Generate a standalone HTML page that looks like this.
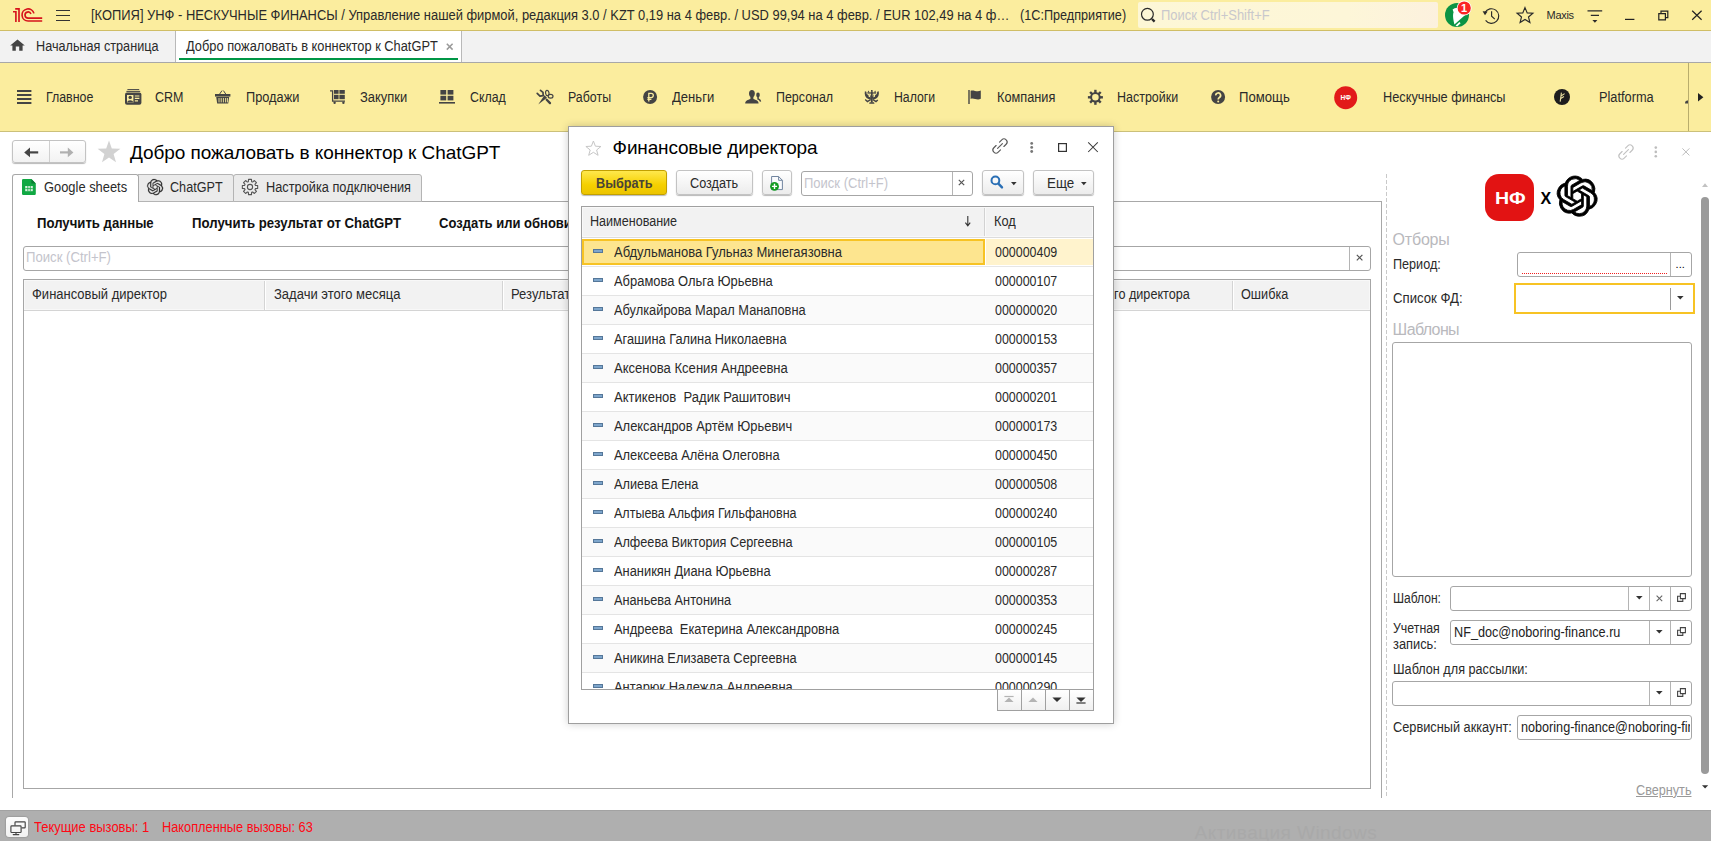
<!DOCTYPE html>
<html lang="ru"><head><meta charset="utf-8"><title>1С:Предприятие</title>
<style>
*{box-sizing:border-box;margin:0;padding:0}
html,body{width:1711px;height:841px;overflow:hidden;background:#fff}
body{font-family:"Liberation Sans",sans-serif;font-size:13px;color:#2a2a2a;position:relative}
.abs{position:absolute}
.t{position:absolute;white-space:pre;transform-origin:0 0}
svg{overflow:visible}
.btn{position:absolute;border:1px solid #c3c3c3;border-radius:3px;background:linear-gradient(#ffffff,#ececec);box-shadow:0 1px 1px rgba(0,0,0,.28)}
.inp{position:absolute;border:1px solid #a6a6a6;border-radius:3px;background:#fff}
.vsep{position:absolute;width:1px;background:#b4b4b4;top:0;bottom:0}
</style></head><body>
<div id="titlebar" class="abs" style="left:0px;top:0px;width:1711px;height:31px;background:#fbed9e;border-bottom:1px solid #d0be66"><svg class="abs" style="left:13px;top:8px;" width="30" height="15" viewBox="0 0 30 15"><g fill="none" stroke="#d6131c" stroke-width="1.65"><path d="M2.2 0.9 H6 V14.1"/><path d="M0 3.7 H2.9 V14.1"/><path d="M20.94 5.38 A6.05 6.05 0 1 0 15.1 13 H29.2"/><path d="M17.92 6.0 A3.05 3.05 0 1 0 15.05 10.1 H29.2"/></g></svg><svg class="abs" style="left:55px;top:9px;" width="16" height="13" viewBox="0 0 16 13"><g stroke="#333" stroke-width="1.2"><path d="M1 1.5H15M1 6.5H15M1 11.5H15"/></g></svg><span class="t" style="left:90.6px;top:6.0px;font-size:14px;line-height:18px;transform:scaleX(0.9223);">[КОПИЯ] УНФ - НЕСКУЧНЫЕ ФИНАНСЫ / Управление нашей фирмой, редакция 3.0 / KZT 0,19 на 4 февр. / USD 99,94 на 4 февр. / EUR 102,49 на 4 ф…</span><span class="t" style="left:1020.3px;top:6.0px;font-size:14px;line-height:18px;transform:scaleX(0.9037);">(1С:Предприятие)</span><div class="abs" style="left:1138px;top:2px;width:300px;height:26px;border-radius:2px;background:linear-gradient(90deg,#fdf7d6,#fdf6d8 70%,#fcf1de)"><svg class="abs" style="left:3px;top:3px;" width="16" height="18" viewBox="0 0 16 18"><circle cx="6.4" cy="9.3" r="5.9" fill="none" stroke="#2a2a2a" stroke-width="1.2"/><path d="M11 14L13.6 16.6" stroke="#2a2a2a" stroke-width="2.4" stroke-linecap="butt"/></svg></div><span class="t" style="left:1160.7px;top:6.0px;font-size:14px;line-height:18px;color:#c9c8cc;transform:scaleX(0.9261);">Поиск Ctrl+Shift+F</span><svg class="abs" style="left:1444px;top:2px;" width="28" height="27" viewBox="0 0 28 27"><circle cx="13" cy="13" r="12" fill="#0b9444"/><path d="M8.6 7.4 L9.6 10.2 C8.3 13.6 9.6 18.6 10.4 22.6 L18.6 15.2 L21.8 12.6 C18.8 10.4 15.4 7.4 13.6 5.8 L10.6 6.2 Z" fill="#fff"/><path d="M11.6 23.6 L15.4 20.0 L16.6 21.2 L13.2 24.6 Z" fill="#fff"/><circle cx="20.2" cy="6" r="7.4" fill="#fff"/><circle cx="20.2" cy="6" r="6.6" fill="#fb2323"/><text x="20.1" y="9.9" font-family="Liberation Sans" font-weight="700" font-size="11" fill="#fff" text-anchor="middle">1</text></svg><svg class="abs" style="left:1482px;top:6px;" width="19" height="19" viewBox="0 0 19 19"><path d="M3.0 6.6 A7.3 7.3 0 1 1 3.6 14.4" fill="none" stroke="#2a2a2a" stroke-width="1.15"/><path d="M0.6 5.2 L5.6 5.6 L3.0 9.2 Z" fill="#2a2a2a"/><path d="M9.6 5.2 V10.2 L12.8 13.2" fill="none" stroke="#2a2a2a" stroke-width="1.15"/></svg><svg class="abs" style="left:1516px;top:6px;" width="18" height="18" viewBox="0 0 18 18"><path d="M9 1.6 L11.2 6.9 L16.9 7.3 L12.5 11 L13.9 16.6 L9 13.5 L4.1 16.6 L5.5 11 L1.1 7.3 L6.8 6.9 Z" fill="none" stroke="#2a2a2a" stroke-width="1.15" stroke-linejoin="miter"/></svg><span class="t" style="left:1546.6px;top:7.5px;font-size:11px;line-height:15px;letter-spacing:-0.307px;">Maxis</span><svg class="abs" style="left:1587px;top:9px;" width="16" height="15" viewBox="0 0 16 15"><path d="M0.5 1.8H15.2M3.8 6.4H12" stroke="#2a2a2a" stroke-width="1.15"/><path d="M5.4 11 H10.4 L7.9 13.8 Z" fill="#2a2a2a"/></svg><svg class="abs" style="left:1625px;top:18px;" width="10" height="3" viewBox="0 0 10 3"><path d="M0 1.4H9.4" stroke="#222" stroke-width="1.2"/></svg><svg class="abs" style="left:1658px;top:10px;" width="12" height="11" viewBox="0 0 12 11"><path d="M0.8 3.6 H7.4 V9.8 H0.8 Z M3 3.6 V1.2 H9.8 V7.6 H7.4" fill="none" stroke="#222" stroke-width="1.2"/></svg><svg class="abs" style="left:1691px;top:10px;" width="12" height="11" viewBox="0 0 12 11"><path d="M1.2 0.8 L10.6 9.8 M10.6 0.8 L1.2 9.8" stroke="#222" stroke-width="1.2"/></svg></div>
<div id="tabbar" class="abs" style="left:0px;top:31px;width:1711px;height:32px;background:#f2f2f2;border-bottom:1px solid #a8a8a8"><svg class="abs" style="left:10px;top:8px;" width="15" height="12" viewBox="0 0 15 12"><path d="M7.5 0.4 L14.8 6.6 H12.6 V11.8 H9.2 V7.6 H5.8 V11.8 H2.4 V6.6 H0.2 Z" fill="#444"/></svg><span class="t" style="left:36.3px;top:6.0px;font-size:14px;line-height:18px;transform:scaleX(0.9043);">Начальная страница</span><div class="abs" style="left:175px;top:0px;width:287px;height:31px;background:#fff;border-left:1px solid #b9b9b9;border-right:1px solid #b9b9b9"></div><div class="abs" style="left:179px;top:27px;width:279px;height:2px;background:#009646"></div><span class="t" style="left:186.1px;top:6.0px;font-size:14px;line-height:18px;transform:scaleX(0.9165);">Добро пожаловать в коннектор к ChatGPT</span><svg class="abs" style="left:446px;top:12px;" width="8" height="8" viewBox="0 0 8 8"><path d="M0.8 0.8 L6.6 6.6 M6.6 0.8 L0.8 6.6" stroke="#9a9a9a" stroke-width="1.5"/></svg></div>
<div id="sections" class="abs" style="left:0px;top:63px;width:1711px;height:68px;background:#fbed9e"><svg class="abs" style="left:17px;top:27px;" width="15" height="15" viewBox="0 0 15 15"><path d="M0 1H14.4M0 5H14.4M0 9H14.4M0 13H14.4" stroke="#444" stroke-width="2"/></svg><span class="t" style="left:46.1px;top:24.8px;font-size:14px;line-height:18px;transform:scaleX(0.8841);">Главное</span><svg class="abs" style="left:125px;top:26px;" width="17" height="16" viewBox="0 0 17 16"><path d="M2.4 0.6H14.2M1.4 2.4H15.2" stroke="#444" stroke-width="1"/><rect x="0" y="3.6" width="16.4" height="12.2" rx="2" fill="#444"/><rect x="2" y="6" width="6.4" height="7.6" fill="#fbed9e"/><circle cx="5.2" cy="8.4" r="1.7" fill="#444"/><path d="M2.2 13.6 C2.4 10.6 8 10.6 8.2 13.6Z" fill="#444"/><path d="M9.8 7H14.4M9.8 9.4H14.4M9.8 11.8H13" stroke="#fbed9e" stroke-width="1.2"/></svg><span class="t" style="left:155.4px;top:24.8px;font-size:14px;line-height:18px;transform:scaleX(0.8937);">CRM</span><svg class="abs" style="left:215px;top:27px;" width="16" height="14" viewBox="0 0 16 14"><path d="M4.4 4.4 L7 0.6 M11 4.4 L8.4 0.6" stroke="#444" stroke-width="1" fill="none"/><rect x="0" y="4" width="15.4" height="2.6" fill="#444"/><path d="M1.2 7 H14.2 L13.2 13.6 H2.2 Z" fill="#444"/><path d="M4 8V12.4M6.2 8V12.4M8.4 8V12.4M10.6 8V12.4M12.4 8V12.4" stroke="#fbed9e" stroke-width="0.9"/></svg><span class="t" style="left:245.5px;top:24.8px;font-size:14px;line-height:18px;transform:scaleX(0.9116);">Продажи</span><svg class="abs" style="left:330px;top:27px;" width="16" height="14" viewBox="0 0 16 14"><path d="M0 0.8H2.6V11.2H15" stroke="#444" stroke-width="1.3" fill="none"/><rect x="4" y="0" width="4.6" height="3.8" fill="#444"/><rect x="9.4" y="0" width="5.4" height="3.8" fill="#444"/><rect x="4" y="4.8" width="4.6" height="4.4" fill="#444"/><rect x="9.4" y="4.8" width="5.4" height="4.4" fill="#444"/><circle cx="4.6" cy="12.8" r="1.2" fill="#444"/><circle cx="13.4" cy="12.8" r="1.2" fill="#444"/></svg><span class="t" style="left:360.3px;top:24.8px;font-size:14px;line-height:18px;transform:scaleX(0.9244);">Закупки</span><svg class="abs" style="left:439px;top:27px;" width="16" height="14" viewBox="0 0 16 14"><rect x="1.4" y="0" width="5.8" height="4.6" fill="#444"/><rect x="8.6" y="0" width="5.8" height="4.6" fill="#444"/><rect x="1.4" y="5.8" width="5.8" height="4.6" fill="#444"/><rect x="8.6" y="5.8" width="5.8" height="4.6" fill="#444"/><rect x="0" y="12" width="16" height="1.6" fill="#444"/></svg><span class="t" style="left:469.5px;top:24.8px;font-size:14px;line-height:18px;transform:scaleX(0.8833);">Склад</span><svg class="abs" style="left:536px;top:26px;" width="17" height="17" viewBox="0 0 17 17"><path d="M4.5 1.3 L7 3.4 L7.2 6.6 L4 7.2 L1.2 4.4" fill="none" stroke="#444" stroke-width="1.7" stroke-linejoin="round" stroke-linecap="round"/><ellipse cx="11.3" cy="4" rx="1.7" ry="2.7" transform="rotate(-10 11.3 4)" fill="none" stroke="#444" stroke-width="1.2"/><ellipse cx="14.6" cy="7.2" rx="2.4" ry="1.9" fill="none" stroke="#444" stroke-width="1.2"/><path d="M8.4 6.2 L11 8.8 L2.2 15.6 Z" fill="#444"/><path d="M10.7 10.8 L14 14.1" stroke="#444" stroke-width="2.3" stroke-linecap="round"/></svg><span class="t" style="left:567.5px;top:24.8px;font-size:14px;line-height:18px;transform:scaleX(0.8861);">Работы</span><svg class="abs" style="left:643px;top:27px;" width="15" height="15" viewBox="0 0 15 15"><circle cx="7.1" cy="7" r="7" fill="#444"/><path d="M5.8 11.4 V3.4 H8.2 A2.1 2.1 0 0 1 8.2 7.6 H4.4 M4.4 9.4 H8.4" fill="none" stroke="#fbed9e" stroke-width="1.3"/></svg><span class="t" style="left:671.7px;top:24.8px;font-size:14px;line-height:18px;transform:scaleX(0.9329);">Деньги</span><svg class="abs" style="left:745px;top:27px;" width="17" height="14" viewBox="0 0 17 14"><ellipse cx="6.9" cy="3.6" rx="2.9" ry="3.6" fill="#444"/><path d="M0.2 13.5 C0.2 10.6 3 9.9 5.4 9 V6.4 H8.4 V9 C10.8 9.9 13.6 10.6 13.6 13.5 Z" fill="#444"/><ellipse cx="13" cy="5" rx="1.8" ry="2.4" fill="#444"/><path d="M12.3 6.4 H13.8 V8.4 C15 8.9 16 9.8 16.2 11.4 L14.9 11.8 C14.6 10.4 13.6 9.8 12.3 9.4 Z" fill="#444"/></svg><span class="t" style="left:775.7px;top:24.8px;font-size:14px;line-height:18px;transform:scaleX(0.8885);">Персонал</span><svg class="abs" style="left:864px;top:27px;" width="16" height="14" viewBox="0 0 16 14"><g fill="#444"><rect x="7" y="0" width="1.6" height="1.6"/><path d="M3.4 2.6 L4.5 0.4 L5.6 2.6Z M10 2.6 L11.1 0.4 L12.2 2.6Z"/><rect x="3.4" y="2.4" width="8.8" height="1.2"/><rect x="6.9" y="1.4" width="1.8" height="11.2"/><path d="M0.9 1.2 L2.4 1.8 L2.7 4 L4.4 5 L4.7 6.8 L6.9 7.6 V9.8 L4.4 9 L2.6 8 L1.2 6 L0.7 3.6Z"/><path d="M14.7 1.2 L13.2 1.8 L12.9 4 L11.2 5 L10.9 6.8 L8.7 7.6 V9.8 L11.2 9 L13 8 L14.4 6 L14.9 3.6Z"/><path d="M5.6 4 L7 6.4 H8.6 L10 4 L9 8.6 H6.6Z"/><path d="M5.1 13.8 L5.6 12.2 H10 L10.5 13.8Z"/></g><path d="M6.6 9.6 L3.4 11.6 L1.2 9.6 M9 9.6 L12 11.6 L13.8 10" fill="none" stroke="#444" stroke-width="1.3"/></svg><span class="t" style="left:894.4px;top:24.8px;font-size:14px;line-height:18px;transform:scaleX(0.8778);">Налоги</span><svg class="abs" style="left:968px;top:27px;" width="14" height="14" viewBox="0 0 14 14"><path d="M1 0V14" stroke="#444" stroke-width="1.4"/><path d="M2.6 0.8 C5.6 -0.6 8.4 2.4 12.8 0.6 V8.8 C8.8 10.8 5.6 7.4 2.6 9 Z" fill="#444"/></svg><span class="t" style="left:997.1px;top:24.8px;font-size:14px;line-height:18px;transform:scaleX(0.9098);">Компания</span><svg class="abs" style="left:1088px;top:27px;" width="15" height="15" viewBox="0 0 15 15"><rect x="6.2" y="-0.2" width="2.4" height="3.4" transform="rotate(0 7.4 7.3)" fill="#444"/><rect x="6.2" y="-0.2" width="2.4" height="3.4" transform="rotate(45 7.4 7.3)" fill="#444"/><rect x="6.2" y="-0.2" width="2.4" height="3.4" transform="rotate(90 7.4 7.3)" fill="#444"/><rect x="6.2" y="-0.2" width="2.4" height="3.4" transform="rotate(135 7.4 7.3)" fill="#444"/><rect x="6.2" y="-0.2" width="2.4" height="3.4" transform="rotate(180 7.4 7.3)" fill="#444"/><rect x="6.2" y="-0.2" width="2.4" height="3.4" transform="rotate(225 7.4 7.3)" fill="#444"/><rect x="6.2" y="-0.2" width="2.4" height="3.4" transform="rotate(270 7.4 7.3)" fill="#444"/><rect x="6.2" y="-0.2" width="2.4" height="3.4" transform="rotate(315 7.4 7.3)" fill="#444"/><circle cx="7.4" cy="7.3" r="4.3" fill="none" stroke="#444" stroke-width="2"/></svg><span class="t" style="left:1117.4px;top:24.8px;font-size:14px;line-height:18px;transform:scaleX(0.8914);">Настройки</span><svg class="abs" style="left:1211px;top:26.5px;" width="15" height="15" viewBox="0 0 15 15"><circle cx="7.1" cy="7" r="7" fill="#444"/><path d="M4.8 5.4 A2.4 2.4 0 1 1 8.4 7.4 C7.4 8 7.2 8.4 7.2 9.4" fill="none" stroke="#fbed9e" stroke-width="1.7"/><circle cx="7.2" cy="11.4" r="1" fill="#fbed9e"/></svg><span class="t" style="left:1238.8px;top:24.8px;font-size:14px;line-height:18px;transform:scaleX(0.9394);">Помощь</span><svg class="abs" style="left:1333.5px;top:22.5px;" width="24" height="24" viewBox="0 0 24 24"><circle cx="11.7" cy="11.7" r="11.5" fill="#e21a1a"/><text x="11.7" y="14.2" font-family="Liberation Sans" font-weight="700" font-size="6.6" fill="#fff" text-anchor="middle">НФ</text></svg><span class="t" style="left:1383.1px;top:24.8px;font-size:14px;line-height:18px;transform:scaleX(0.9101);">Нескучные финансы</span><svg class="abs" style="left:1554px;top:26px;" width="16" height="16" viewBox="0 0 16 16"><circle cx="8" cy="8" r="8" fill="#1d1d1d"/><path d="M6.2 12.6 L7.4 3.6 M7 7 L10.6 4.6 M6.8 9.4 L10 7.6" stroke="#e9dfa0" stroke-width="1.1" fill="none"/></svg><span class="t" style="left:1599.3px;top:24.8px;font-size:14px;line-height:18px;transform:scaleX(0.9129);">Platforma</span><svg class="abs" style="left:1685px;top:36px;" width="4" height="5" viewBox="0 0 4 5"><path d="M0 4.4 C0 2 1.6 1.6 3.4 1.6 V4.4Z" fill="#444"/></svg><div class="abs" style="left:1688px;top:0px;width:1px;height:68px;background:#b9ad6c"></div><svg class="abs" style="left:1698px;top:29.5px;" width="6" height="9" viewBox="0 0 6 9"><path d="M0 0 L5.4 4.2 L0 8.4Z" fill="#222"/></svg></div>
<div class="abs" style="left:0px;top:131px;width:1711px;height:1px;background:#cbc07a"></div>
<div id="main" class="abs" style="left:0px;top:132px;width:1711px;height:678px;background:#fff"><div class="btn" style="left:12px;top:8px;width:74px;height:23px;background:linear-gradient(#fff,#f2f2f2)"><div class="abs" style="left:36px;top:0;width:1px;height:21px;background:#d0d0d0"></div></div><svg class="abs" style="left:24px;top:15px;" width="15" height="11" viewBox="0 0 15 11"><path d="M14.2 5.4H3" stroke="#444" stroke-width="2.2"/><path d="M0.2 5.4 L6 0.6 V10.2Z" fill="#444"/></svg><svg class="abs" style="left:60px;top:15px;" width="14" height="11" viewBox="0 0 14 11"><path d="M0 5.4H10.6" stroke="#b0b0b0" stroke-width="2.2"/><path d="M13.4 5.4 L7.8 0.6 V10.2Z" fill="#b0b0b0"/></svg><svg class="abs" style="left:96.5px;top:8.2px;" width="24" height="23" viewBox="0 0 24 23"><path d="M12 0.6 L14.8 8.6 L23.4 8.8 L16.6 14 L19 22.2 L12 17.4 L5 22.2 L7.4 14 L0.6 8.8 L9.2 8.6 Z" fill="#d2d2d2"/></svg><span class="t" style="left:130.0px;top:9.2px;font-size:19px;line-height:23px;color:#000;letter-spacing:-0.068px;">Добро пожаловать в коннектор к ChatGPT</span><div class="abs" style="left:12px;top:69px;width:1370px;height:597px;border:1px solid #a8a8a8;border-bottom:none;background:#fff"></div><div class="abs" style="left:138px;top:42px;width:96px;height:28px;background:#ebebeb;border:1px solid #b4b4b4;border-left:none;border-radius:0 3px 0 0"></div><div class="abs" style="left:233px;top:42px;width:189px;height:28px;background:#ebebeb;border:1px solid #b4b4b4;border-radius:3px 3px 0 0"></div><div class="abs" style="left:12px;top:42px;width:127px;height:28px;background:#fff;border:1px solid #a8a8a8;border-bottom:none;border-radius:3px 3px 0 0"></div><svg class="abs" style="left:22px;top:47px;" width="14" height="16" viewBox="0 0 14 16"><path d="M0 1.2 A1.2 1.2 0 0 1 1.2 0 H9.4 L13.8 4.4 V14.8 A1.2 1.2 0 0 1 12.6 16 H1.2 A1.2 1.2 0 0 1 0 14.8Z" fill="#11a843"/><path d="M9.4 0 L13.8 4.4 H9.4Z" fill="#0a7c33"/><rect x="3.2" y="7" width="7.6" height="5.2" fill="#d8f0df"/><path d="M3.2 9.6H10.8M5.8 7V12.2M8.3 7V12.2" stroke="#11a843" stroke-width="0.8"/></svg><span class="t" style="left:44.1px;top:45.6px;font-size:14px;line-height:18px;transform:scaleX(0.9203);">Google sheets</span><svg class="abs" style="left:146.8px;top:46.8px;" width="16.2" height="16.2" viewBox="0 0 24 24"><path d="M22.2819 9.8211a5.9847 5.9847 0 0 0-.5157-4.9108 6.0462 6.0462 0 0 0-6.5098-2.9A6.0651 6.0651 0 0 0 4.9807 4.1818a5.9847 5.9847 0 0 0-3.9977 2.9 6.0462 6.0462 0 0 0 .7427 7.0966 5.98 5.98 0 0 0 .511 4.9107 6.051 6.051 0 0 0 6.5146 2.9001A5.9847 5.9847 0 0 0 13.2599 24a6.0557 6.0557 0 0 0 5.7718-4.2058 5.9894 5.9894 0 0 0 3.9977-2.9001 6.0557 6.0557 0 0 0-.7475-7.0729zm-9.022 12.6081a4.4755 4.4755 0 0 1-2.8764-1.0408l.1419-.0804 4.7783-2.7582a.7948.7948 0 0 0 .3927-.6813v-6.7369l2.02 1.1686a.071.071 0 0 1 .038.052v5.5826a4.504 4.504 0 0 1-4.4945 4.4944zm-9.6607-4.1254a4.4708 4.4708 0 0 1-.5346-3.0137l.142.0852 4.783 2.7582a.7712.7712 0 0 0 .7806 0l5.8428-3.3685v2.3324a.0804.0804 0 0 1-.0332.0615L9.74 19.9502a4.4992 4.4992 0 0 1-6.1408-1.6464zM2.3408 7.8956a4.485 4.485 0 0 1 2.3655-1.9728V11.6a.7664.7664 0 0 0 .3879.6765l5.8144 3.3543-2.0201 1.1685a.0757.0757 0 0 1-.071 0l-4.8303-2.7865A4.504 4.504 0 0 1 2.3408 7.872zm16.5963 3.8558L13.1038 8.364 15.1192 7.2a.0757.0757 0 0 1 .071 0l4.8303 2.7913a4.4944 4.4944 0 0 1-.6765 8.1042v-5.6772a.79.79 0 0 0-.407-.667zm2.0107-3.0231l-.142-.0852-4.7735-2.7818a.7759.7759 0 0 0-.7854 0L9.409 9.2297V6.8974a.0662.0662 0 0 1 .0284-.0615l4.8303-2.7866a4.4992 4.4992 0 0 1 6.6802 4.66zM8.3065 12.863l-2.02-1.1638a.0804.0804 0 0 1-.038-.0567V6.0742a4.4992 4.4992 0 0 1 7.3757-3.4537l-.142.0805L8.704 5.459a.7948.7948 0 0 0-.3927.6813zm1.0976-2.3654l2.602-1.4998 2.6069 1.4998v2.9994l-2.5974 1.4997-2.6067-1.4997Z" fill="#333" stroke="#333" stroke-width="0.3"/></svg><span class="t" style="left:170.2px;top:45.6px;font-size:14px;line-height:18px;transform:scaleX(0.9013);">ChatGPT</span><svg class="abs" style="left:242px;top:47px;" width="16" height="16" viewBox="0 0 16 16"><path d="M6.53 0.34 L9.47 0.34 L9.65 2.65 L10.61 3.05 L12.37 1.54 L14.46 3.63 L12.95 5.39 L13.35 6.35 L15.66 6.53 L15.66 9.47 L13.35 9.65 L12.95 10.61 L14.46 12.37 L12.37 14.46 L10.61 12.95 L9.65 13.35 L9.47 15.66 L6.53 15.66 L6.35 13.35 L5.39 12.95 L3.63 14.46 L1.54 12.37 L3.05 10.61 L2.65 9.65 L0.34 9.47 L0.34 6.53 L2.65 6.35 L3.05 5.39 L1.54 3.63 L3.63 1.54 L5.39 3.05 L6.35 2.65Z" fill="none" stroke="#555" stroke-width="1.1" stroke-linejoin="round"/><circle cx="8" cy="8" r="2.6" fill="none" stroke="#555" stroke-width="1.1"/></svg><span class="t" style="left:265.5px;top:45.6px;font-size:14px;line-height:18px;transform:scaleX(0.9125);">Настройка подключения</span><span class="t" style="left:37.3px;top:82.0px;font-size:14px;line-height:18px;font-weight:700;color:#111;transform:scaleX(0.9397);">Получить данные</span><span class="t" style="left:192.0px;top:82.0px;font-size:14px;line-height:18px;font-weight:700;color:#111;transform:scaleX(0.9418);">Получить результат от ChatGPT</span><span class="t" style="left:439.0px;top:82.0px;font-size:14px;line-height:18px;font-weight:700;color:#111;transform:scaleX(0.9300);">Создать или обновить черновики писем</span><div class="inp" style="left:23px;top:114px;width:1348px;height:25px;"><div class="vsep" style="left:1325px"></div></div><span class="t" style="left:26.0px;top:116.2px;font-size:14px;line-height:18px;color:#c4c4cc;transform:scaleX(0.9391);">Поиск (Ctrl+F)</span><svg class="abs" style="left:1356px;top:122px;" width="8" height="8" viewBox="0 0 8 8"><path d="M0.8 0.8 L6.4 6.4 M6.4 0.8 L0.8 6.4" stroke="#555" stroke-width="1.2"/></svg><div class="abs" style="left:23px;top:147px;width:1348px;height:510px;border:1px solid #a6a6a6;background:#fff"></div><div class="abs" style="left:24px;top:148px;width:1346px;height:31px;background:#f2f2f2;border-bottom:1px solid #d4d4d4;box-shadow:inset 0 0 0 1px #f8f8f8"></div><div class="abs" style="left:264px;top:149px;width:2px;height:29px;background:#fff;border-left:1px solid #d4d4d4"></div><div class="abs" style="left:502px;top:149px;width:2px;height:29px;background:#fff;border-left:1px solid #d4d4d4"></div><div class="abs" style="left:740px;top:149px;width:2px;height:29px;background:#fff;border-left:1px solid #d4d4d4"></div><div class="abs" style="left:978px;top:149px;width:2px;height:29px;background:#fff;border-left:1px solid #d4d4d4"></div><div class="abs" style="left:1232px;top:149px;width:2px;height:29px;background:#fff;border-left:1px solid #d4d4d4"></div><span class="t" style="left:32.0px;top:153.0px;font-size:14px;line-height:18px;transform:scaleX(0.9275);">Финансовый директор</span><span class="t" style="left:273.5px;top:153.0px;font-size:14px;line-height:18px;transform:scaleX(0.9298);">Задачи этого месяца</span><span class="t" style="left:511.0px;top:153.0px;font-size:14px;line-height:18px;transform:scaleX(0.9300);">Результат от ChatGPT</span><span class="t" style="left:749.0px;top:153.0px;font-size:14px;line-height:18px;transform:scaleX(0.9300);">Ссылка на документ</span><span class="t" style="left:1010.0px;top:153.0px;font-size:14px;line-height:18px;transform:scaleX(0.9022);">Почта финансового директора</span><span class="t" style="left:1241.2px;top:153.0px;font-size:14px;line-height:18px;transform:scaleX(0.9063);">Ошибка</span><div class="abs" style="left:1386px;top:42px;width:1px;height:622px;background:repeating-linear-gradient(#c9c9c9 0 4px,#fff 4px 6px)"></div></div>
<div id="right" class="abs" style="left:1388px;top:132px;width:323px;height:678px;"><svg class="abs" style="left:229.5px;top:11.5px;" width="16" height="16" viewBox="0 0 16 16"><g fill="none" stroke="#c2c2c2" stroke-width="1.15" stroke-linecap="round" transform="translate(8 8) rotate(-45)"><path d="M-2.4 -3.1 H-5.6 A3.1 3.1 0 0 0 -5.6 3.1 H-2.4"/><path d="M2.4 -3.1 H5.6 A3.1 3.1 0 0 1 5.6 3.1 H2.4"/><path d="M-3.4 0 H3.4"/></g></svg><svg class="abs" style="left:266px;top:14px;" width="4" height="12" viewBox="0 0 4 12"><circle cx="1.8" cy="1.6" r="1.3" fill="#bdbdbd"/><circle cx="1.8" cy="5.9" r="1.3" fill="#bdbdbd"/><circle cx="1.8" cy="10.2" r="1.3" fill="#bdbdbd"/></svg><svg class="abs" style="left:293.5px;top:15.5px;" width="8" height="8" viewBox="0 0 8 8"><path d="M0.4 0.4 L7.4 7.4 M7.4 0.4 L0.4 7.4" stroke="#bdbdbd" stroke-width="1"/></svg><div class="abs" style="left:97px;top:42px;width:49px;height:47px;background:#e21313;border-radius:14px"></div><span class="t" style="left:107.1px;top:56.9px;font-size:16px;line-height:20px;font-weight:700;color:#fff;transform:scaleX(1.22);transform-origin:0 50%;">НФ</span><span class="t" style="left:152.6px;top:57.0px;font-size:16px;line-height:20px;font-weight:700;color:#000;">X</span><svg class="abs" style="left:169px;top:44.4px;" width="40.3" height="40.3" viewBox="0 0 24 24"><path d="M22.2819 9.8211a5.9847 5.9847 0 0 0-.5157-4.9108 6.0462 6.0462 0 0 0-6.5098-2.9A6.0651 6.0651 0 0 0 4.9807 4.1818a5.9847 5.9847 0 0 0-3.9977 2.9 6.0462 6.0462 0 0 0 .7427 7.0966 5.98 5.98 0 0 0 .511 4.9107 6.051 6.051 0 0 0 6.5146 2.9001A5.9847 5.9847 0 0 0 13.2599 24a6.0557 6.0557 0 0 0 5.7718-4.2058 5.9894 5.9894 0 0 0 3.9977-2.9001 6.0557 6.0557 0 0 0-.7475-7.0729zm-9.022 12.6081a4.4755 4.4755 0 0 1-2.8764-1.0408l.1419-.0804 4.7783-2.7582a.7948.7948 0 0 0 .3927-.6813v-6.7369l2.02 1.1686a.071.071 0 0 1 .038.052v5.5826a4.504 4.504 0 0 1-4.4945 4.4944zm-9.6607-4.1254a4.4708 4.4708 0 0 1-.5346-3.0137l.142.0852 4.783 2.7582a.7712.7712 0 0 0 .7806 0l5.8428-3.3685v2.3324a.0804.0804 0 0 1-.0332.0615L9.74 19.9502a4.4992 4.4992 0 0 1-6.1408-1.6464zM2.3408 7.8956a4.485 4.485 0 0 1 2.3655-1.9728V11.6a.7664.7664 0 0 0 .3879.6765l5.8144 3.3543-2.0201 1.1685a.0757.0757 0 0 1-.071 0l-4.8303-2.7865A4.504 4.504 0 0 1 2.3408 7.872zm16.5963 3.8558L13.1038 8.364 15.1192 7.2a.0757.0757 0 0 1 .071 0l4.8303 2.7913a4.4944 4.4944 0 0 1-.6765 8.1042v-5.6772a.79.79 0 0 0-.407-.667zm2.0107-3.0231l-.142-.0852-4.7735-2.7818a.7759.7759 0 0 0-.7854 0L9.409 9.2297V6.8974a.0662.0662 0 0 1 .0284-.0615l4.8303-2.7866a4.4992 4.4992 0 0 1 6.6802 4.66zM8.3065 12.863l-2.02-1.1638a.0804.0804 0 0 1-.038-.0567V6.0742a4.4992 4.4992 0 0 1 7.3757-3.4537l-.142.0805L8.704 5.459a.7948.7948 0 0 0-.3927.6813zm1.0976-2.3654l2.602-1.4998 2.6069 1.4998v2.9994l-2.5974 1.4997-2.6067-1.4997Z" fill="#000" stroke="#000" stroke-width="0.5"/></svg><span class="t" style="left:4.6px;top:98.0px;font-size:16px;line-height:20px;color:#b9b9bd;letter-spacing:-0.206px;">Отборы</span><span class="t" style="left:4.6px;top:123.1px;font-size:14px;line-height:18px;transform:scaleX(0.9019);">Период:</span><div class="inp" style="left:129px;top:120px;width:175px;height:25px;"><div class="vsep" style="left:152px"></div><div class="abs" style="left:4px;top:20px;width:145px;height:1px;background:repeating-linear-gradient(90deg,#f02020 0 1px,#fff 1px 2px)"></div></div><span class="t" style="left:287.5px;top:125.0px;font-size:11px;line-height:15px;color:#000;letter-spacing:0.109px;">...</span><span class="t" style="left:4.6px;top:156.8px;font-size:14px;line-height:18px;transform:scaleX(0.9401);">Список ФД:</span><div class="abs" style="left:126px;top:151px;width:181px;height:31px;border:2px solid #f7c324;background:#fff"><div class="abs" style="left:153.5px;top:2.5px;width:1px;height:22px;background:#9a9a9a"></div></div><svg class="abs" style="left:289px;top:163.5px;" width="7" height="4" viewBox="0 0 7 4"><path d="M0 0H6.6L3.3 3.6Z" fill="#333"/></svg><span class="t" style="left:4.6px;top:188.4px;font-size:16px;line-height:20px;color:#b9b9bd;letter-spacing:-0.624px;">Шаблоны</span><div class="inp" style="left:4px;top:210px;width:300px;height:235px;"></div><span class="t" style="left:4.6px;top:457.0px;font-size:14px;line-height:18px;transform:scaleX(0.8600);">Шаблон:</span><div class="inp" style="left:62px;top:454px;width:242px;height:25px;"><div class="vsep" style="left:176.6px"></div><div class="vsep" style="left:197.6px"></div><div class="vsep" style="left:218.6px"></div></div><svg class="abs" style="left:247.7px;top:464.2px;" width="7" height="4" viewBox="0 0 7 4"><path d="M0 0H6.6L3.3 3.6Z" fill="#333"/></svg><svg class="abs" style="left:268.2px;top:462.7px;" width="7" height="7" viewBox="0 0 7 7"><path d="M0.6 0.6 L6.2 6.2 M6.2 0.6 L0.6 6.2" stroke="#666" stroke-width="1.1"/></svg><svg class="abs" style="left:288.5px;top:461px;" width="9" height="9" viewBox="0 0 9 9"><path d="M3.4 0.6H8.4V5.6H3.4Z" fill="none" stroke="#444" stroke-width="1.1"/><path d="M3.2 3.2H0.6V8.4H5.8V5.8" fill="none" stroke="#444" stroke-width="1.1"/></svg><span class="t" style="left:4.6px;top:487.1px;font-size:14px;line-height:18px;transform:scaleX(0.8825);">Учетная</span><span class="t" style="left:4.6px;top:503.0px;font-size:14px;line-height:18px;transform:scaleX(0.9185);">запись:</span><div class="inp" style="left:62px;top:488px;width:242px;height:25px;"><div class="vsep" style="left:197.6px"></div><div class="vsep" style="left:218.6px"></div></div><span class="t" style="left:66.1px;top:490.8px;font-size:14px;line-height:18px;color:#222;transform:scaleX(0.9050);">NF_doc@noboring-finance.ru</span><svg class="abs" style="left:268.4px;top:498.2px;" width="7" height="4" viewBox="0 0 7 4"><path d="M0 0H6.6L3.3 3.6Z" fill="#333"/></svg><svg class="abs" style="left:288.5px;top:495px;" width="9" height="9" viewBox="0 0 9 9"><path d="M3.4 0.6H8.4V5.6H3.4Z" fill="none" stroke="#444" stroke-width="1.1"/><path d="M3.2 3.2H0.6V8.4H5.8V5.8" fill="none" stroke="#444" stroke-width="1.1"/></svg><span class="t" style="left:4.6px;top:528.1px;font-size:14px;line-height:18px;transform:scaleX(0.9036);">Шаблон для рассылки:</span><div class="inp" style="left:4px;top:549px;width:300px;height:25px;"><div class="vsep" style="left:255.6px"></div><div class="vsep" style="left:276.6px"></div></div><svg class="abs" style="left:268.4px;top:559.2px;" width="7" height="4" viewBox="0 0 7 4"><path d="M0 0H6.6L3.3 3.6Z" fill="#333"/></svg><svg class="abs" style="left:288.5px;top:556px;" width="9" height="9" viewBox="0 0 9 9"><path d="M3.4 0.6H8.4V5.6H3.4Z" fill="none" stroke="#444" stroke-width="1.1"/><path d="M3.2 3.2H0.6V8.4H5.8V5.8" fill="none" stroke="#444" stroke-width="1.1"/></svg><span class="t" style="left:4.6px;top:585.9px;font-size:14px;line-height:18px;transform:scaleX(0.9114);">Сервисный аккаунт:</span><div class="inp" style="left:129px;top:583px;width:175px;height:25px;overflow:hidden"></div><div class="abs" style="left:130px;top:584px;width:172px;height:23px;overflow:hidden"><span class="t" style="left:3.2px;top:1.9px;font-size:14px;line-height:18px;color:#222;transform:scaleX(0.9300);transform:scaleX(0.902);">noboring-finance@noboring-finance.iam.gserviceaccount.com</span></div><span class="t" style="left:248.3px;top:648.6px;font-size:14px;line-height:18px;color:#999;transform:scaleX(0.9038);text-decoration:underline;">Свернуть</span><svg class="abs" style="left:314px;top:51px;" width="7" height="4" viewBox="0 0 7 4"><path d="M0 3.9 L3 0.3 L6 3.9Z" fill="#c2c2c2"/></svg><div class="abs" style="left:313px;top:65px;width:8px;height:577px;background:#9a9a9a;border-radius:4px"></div><svg class="abs" style="left:314px;top:653px;" width="7" height="4" viewBox="0 0 7 4"><path d="M0 0.2 H6.2 L3.1 3.6Z" fill="#333"/></svg></div>
<div id="dialog" class="abs" style="left:568px;top:126px;width:546px;height:598px;background:#fff;border:1px solid #9e9e9e;box-shadow:0 0 8px rgba(0,0,0,.2)"><svg class="abs" style="left:15.5px;top:12.5px;" width="17" height="16" viewBox="0 0 17 16"><path d="M8.4 1 L10.4 6.2 L15.9 6.5 L11.6 10 L13.1 15.3 L8.4 12.3 L3.7 15.3 L5.2 10 L0.9 6.5 L6.4 6.2 Z" fill="none" stroke="#c6c6c6" stroke-width="1"/></svg><span class="t" style="left:43.6px;top:9.0px;font-size:19px;line-height:23px;color:#000;letter-spacing:-0.162px;">Финансовые директора</span><svg class="abs" style="left:422.5px;top:11.4px;" width="16" height="16" viewBox="0 0 16 16"><g fill="none" stroke="#5a5a5a" stroke-width="1.15" stroke-linecap="round" transform="translate(8 8) rotate(-45)"><path d="M-2.4 -3.1 H-5.6 A3.1 3.1 0 0 0 -5.6 3.1 H-2.4"/><path d="M2.4 -3.1 H5.6 A3.1 3.1 0 0 1 5.6 3.1 H2.4"/><path d="M-3.4 0 H3.4"/></g></svg><svg class="abs" style="left:460.7px;top:15px;" width="4" height="12" viewBox="0 0 4 12"><circle cx="1.7" cy="1.4" r="1.4" fill="#777"/><circle cx="1.7" cy="5.4" r="1.4" fill="#777"/><circle cx="1.7" cy="9.5" r="1.4" fill="#777"/></svg><svg class="abs" style="left:489px;top:16px;" width="9" height="9" viewBox="0 0 9 9"><rect x="0.6" y="0.6" width="7.8" height="7.8" fill="none" stroke="#333" stroke-width="1.2"/></svg><svg class="abs" style="left:519px;top:15px;" width="11" height="11" viewBox="0 0 11 11"><path d="M0.2 0.4 L9.8 10 M9.8 0.4 L0.2 10" stroke="#3a3a3a" stroke-width="1.05"/></svg><div class="btn" style="left:12px;top:43px;width:86px;height:25px;background:linear-gradient(#ffe84d,#f5d000 60%,#ecc400);border-color:#c2a000"></div><span class="t" style="left:26.6px;top:46.8px;font-size:14px;line-height:18px;font-weight:700;color:#4a4436;transform:scaleX(0.9038);">Выбрать</span><div class="btn" style="left:107px;top:43px;width:77px;height:25px;"></div><span class="t" style="left:121.2px;top:46.8px;font-size:14px;line-height:18px;transform:scaleX(0.9057);">Создать</span><div class="btn" style="left:193px;top:43px;width:30px;height:25px;"></div><svg class="abs" style="left:201px;top:49px;" width="14" height="17" viewBox="0 0 14 17"><path d="M1.6 0.5 H8.6 L12.4 4.3 V13.6 H1.6Z" fill="#fafbfd" stroke="#71859f" stroke-width="1"/><path d="M8.6 0.5 V4.3 H12.4" fill="none" stroke="#71859f" stroke-width="1"/><circle cx="4.5" cy="10.4" r="4.4" fill="#129a22"/><path d="M4.5 7.8V13M1.9 10.4H7.1" stroke="#fff" stroke-width="1.4"/></svg><div class="inp" style="left:232px;top:44px;width:172px;height:25px;"><div class="vsep" style="left:149.5px"></div></div><span class="t" style="left:234.9px;top:46.6px;font-size:14px;line-height:18px;color:#c4c4cc;transform:scaleX(0.9291);">Поиск (Ctrl+F)</span><svg class="abs" style="left:389px;top:52px;" width="8" height="8" viewBox="0 0 8 8"><path d="M0.8 0.8 L6.2 6.2 M6.2 0.8 L0.8 6.2" stroke="#555" stroke-width="1.2"/></svg><div class="btn" style="left:413px;top:43px;width:42px;height:25px;"></div><svg class="abs" style="left:421px;top:48px;" width="14" height="14" viewBox="0 0 14 14"><circle cx="5.4" cy="5.4" r="3.9" fill="none" stroke="#2a6fb5" stroke-width="2"/><path d="M8.4 8.6 L12 12.4" stroke="#2a6fb5" stroke-width="2.4" stroke-linecap="round"/></svg><svg class="abs" style="left:442px;top:55px;" width="6" height="4" viewBox="0 0 6 4"><path d="M0 0H5.6L2.8 3.2Z" fill="#333"/></svg><div class="btn" style="left:464px;top:43px;width:61px;height:25px;"></div><span class="t" style="left:478.4px;top:46.8px;font-size:14px;line-height:18px;transform:scaleX(0.9544);">Еще</span><svg class="abs" style="left:512px;top:55px;" width="6" height="4" viewBox="0 0 6 4"><path d="M0 0H5.6L2.8 3.2Z" fill="#333"/></svg><div class="abs" style="left:12px;top:79px;width:513px;height:484px;border:1px solid #a0a0a0;background:#fff;overflow:hidden"></div><div class="abs" style="left:13px;top:80px;width:511px;height:30px;background:#f2f2f2;box-shadow:inset 0 0 0 1px #f9f9f9"></div><div class="abs" style="left:13px;top:110px;width:511px;height:1px;background:#dcdcdc"></div><div class="abs" style="left:415px;top:81px;width:2px;height:28px;background:#fafafa;border-left:1px solid #d2d2d2"></div><span class="t" style="left:21.2px;top:85.0px;font-size:14px;line-height:18px;transform:scaleX(0.8974);">Наименование</span><svg class="abs" style="left:396px;top:89px;" width="6" height="11" viewBox="0 0 6 11"><path d="M2.8 0V9.6M0.4 6.6 L2.8 9.8 L5.2 6.6" fill="none" stroke="#333" stroke-width="1.1"/></svg><span class="t" style="left:425.1px;top:85.0px;font-size:14px;line-height:18px;transform:scaleX(0.9155);">Код</span><div class="abs" style="left:13px;top:112px;width:403px;height:26px;background:#fde58f;border:2px solid #f7c324"></div><div class="abs" style="left:417px;top:112px;width:107px;height:26px;background:#fff3cd"></div><div class="abs" style="left:13px;top:139px;width:511px;height:1px;background:#e6e6e6"></div><div class="abs" style="left:24px;top:122px;width:10px;height:4px;background:#7ea6cc;border:1px solid #557799"></div><span class="t" style="left:45.0px;top:115.5px;font-size:14px;line-height:18px;transform:scaleX(0.9284);">Абдульманова Гульназ Минегаязовна</span><span class="t" style="left:425.5px;top:115.5px;font-size:14px;line-height:18px;transform:scaleX(0.8890);">000000409</span><div class="abs" style="left:13px;top:140px;width:511px;height:29px;background:#fff;border-bottom:1px solid #e4e4e4"></div><div class="abs" style="left:24px;top:151px;width:10px;height:4px;background:#7ea6cc;border:1px solid #557799"></div><span class="t" style="left:45.0px;top:144.5px;font-size:14px;line-height:18px;transform:scaleX(0.9236);">Абрамова Ольга Юрьевна</span><span class="t" style="left:425.5px;top:144.5px;font-size:14px;line-height:18px;transform:scaleX(0.8890);">000000107</span><div class="abs" style="left:13px;top:169px;width:511px;height:29px;background:#fafafa;border-bottom:1px solid #e4e4e4"></div><div class="abs" style="left:24px;top:180px;width:10px;height:4px;background:#7ea6cc;border:1px solid #557799"></div><span class="t" style="left:45.0px;top:173.5px;font-size:14px;line-height:18px;transform:scaleX(0.9160);">Абулкайрова Марал Манаповна</span><span class="t" style="left:425.5px;top:173.5px;font-size:14px;line-height:18px;transform:scaleX(0.8890);">000000020</span><div class="abs" style="left:13px;top:198px;width:511px;height:29px;background:#fff;border-bottom:1px solid #e4e4e4"></div><div class="abs" style="left:24px;top:209px;width:10px;height:4px;background:#7ea6cc;border:1px solid #557799"></div><span class="t" style="left:45.0px;top:202.5px;font-size:14px;line-height:18px;transform:scaleX(0.9139);">Агашина Галина Николаевна</span><span class="t" style="left:425.5px;top:202.5px;font-size:14px;line-height:18px;transform:scaleX(0.8890);">000000153</span><div class="abs" style="left:13px;top:227px;width:511px;height:29px;background:#fafafa;border-bottom:1px solid #e4e4e4"></div><div class="abs" style="left:24px;top:238px;width:10px;height:4px;background:#7ea6cc;border:1px solid #557799"></div><span class="t" style="left:45.0px;top:231.5px;font-size:14px;line-height:18px;transform:scaleX(0.9324);">Аксенова Ксения Андреевна</span><span class="t" style="left:425.5px;top:231.5px;font-size:14px;line-height:18px;transform:scaleX(0.8890);">000000357</span><div class="abs" style="left:13px;top:256px;width:511px;height:29px;background:#fff;border-bottom:1px solid #e4e4e4"></div><div class="abs" style="left:24px;top:267px;width:10px;height:4px;background:#7ea6cc;border:1px solid #557799"></div><span class="t" style="left:45.0px;top:260.5px;font-size:14px;line-height:18px;transform:scaleX(0.9313);">Актикенов  Радик Рашитович</span><span class="t" style="left:425.5px;top:260.5px;font-size:14px;line-height:18px;transform:scaleX(0.8890);">000000201</span><div class="abs" style="left:13px;top:285px;width:511px;height:29px;background:#fafafa;border-bottom:1px solid #e4e4e4"></div><div class="abs" style="left:24px;top:296px;width:10px;height:4px;background:#7ea6cc;border:1px solid #557799"></div><span class="t" style="left:45.0px;top:289.5px;font-size:14px;line-height:18px;transform:scaleX(0.9220);">Александров Артём Юрьевич</span><span class="t" style="left:425.5px;top:289.5px;font-size:14px;line-height:18px;transform:scaleX(0.8890);">000000173</span><div class="abs" style="left:13px;top:314px;width:511px;height:29px;background:#fff;border-bottom:1px solid #e4e4e4"></div><div class="abs" style="left:24px;top:325px;width:10px;height:4px;background:#7ea6cc;border:1px solid #557799"></div><span class="t" style="left:45.0px;top:318.5px;font-size:14px;line-height:18px;transform:scaleX(0.9198);">Алексеева Алёна Олеговна</span><span class="t" style="left:425.5px;top:318.5px;font-size:14px;line-height:18px;transform:scaleX(0.8890);">000000450</span><div class="abs" style="left:13px;top:343px;width:511px;height:29px;background:#fafafa;border-bottom:1px solid #e4e4e4"></div><div class="abs" style="left:24px;top:354px;width:10px;height:4px;background:#7ea6cc;border:1px solid #557799"></div><span class="t" style="left:45.0px;top:347.5px;font-size:14px;line-height:18px;transform:scaleX(0.9086);">Алиева Елена</span><span class="t" style="left:425.5px;top:347.5px;font-size:14px;line-height:18px;transform:scaleX(0.8890);">000000508</span><div class="abs" style="left:13px;top:372px;width:511px;height:29px;background:#fff;border-bottom:1px solid #e4e4e4"></div><div class="abs" style="left:24px;top:383px;width:10px;height:4px;background:#7ea6cc;border:1px solid #557799"></div><span class="t" style="left:45.0px;top:376.5px;font-size:14px;line-height:18px;transform:scaleX(0.8942);">Алтыева Альфия Гильфановна</span><span class="t" style="left:425.5px;top:376.5px;font-size:14px;line-height:18px;transform:scaleX(0.8890);">000000240</span><div class="abs" style="left:13px;top:401px;width:511px;height:29px;background:#fafafa;border-bottom:1px solid #e4e4e4"></div><div class="abs" style="left:24px;top:412px;width:10px;height:4px;background:#7ea6cc;border:1px solid #557799"></div><span class="t" style="left:45.0px;top:405.5px;font-size:14px;line-height:18px;transform:scaleX(0.9055);">Алфеева Виктория Сергеевна</span><span class="t" style="left:425.5px;top:405.5px;font-size:14px;line-height:18px;transform:scaleX(0.8890);">000000105</span><div class="abs" style="left:13px;top:430px;width:511px;height:29px;background:#fff;border-bottom:1px solid #e4e4e4"></div><div class="abs" style="left:24px;top:441px;width:10px;height:4px;background:#7ea6cc;border:1px solid #557799"></div><span class="t" style="left:45.0px;top:434.5px;font-size:14px;line-height:18px;transform:scaleX(0.9201);">Ананикян Диана Юрьевна</span><span class="t" style="left:425.5px;top:434.5px;font-size:14px;line-height:18px;transform:scaleX(0.8890);">000000287</span><div class="abs" style="left:13px;top:459px;width:511px;height:29px;background:#fafafa;border-bottom:1px solid #e4e4e4"></div><div class="abs" style="left:24px;top:470px;width:10px;height:4px;background:#7ea6cc;border:1px solid #557799"></div><span class="t" style="left:45.0px;top:463.5px;font-size:14px;line-height:18px;transform:scaleX(0.9098);">Ананьева Антонина</span><span class="t" style="left:425.5px;top:463.5px;font-size:14px;line-height:18px;transform:scaleX(0.8890);">000000353</span><div class="abs" style="left:13px;top:488px;width:511px;height:29px;background:#fff;border-bottom:1px solid #e4e4e4"></div><div class="abs" style="left:24px;top:499px;width:10px;height:4px;background:#7ea6cc;border:1px solid #557799"></div><span class="t" style="left:45.0px;top:492.5px;font-size:14px;line-height:18px;transform:scaleX(0.9209);">Андреева  Екатерина Александровна</span><span class="t" style="left:425.5px;top:492.5px;font-size:14px;line-height:18px;transform:scaleX(0.8890);">000000245</span><div class="abs" style="left:13px;top:517px;width:511px;height:29px;background:#fafafa;border-bottom:1px solid #e4e4e4"></div><div class="abs" style="left:24px;top:528px;width:10px;height:4px;background:#7ea6cc;border:1px solid #557799"></div><span class="t" style="left:45.0px;top:521.5px;font-size:14px;line-height:18px;transform:scaleX(0.9161);">Аникина Елизавета Сергеевна</span><span class="t" style="left:425.5px;top:521.5px;font-size:14px;line-height:18px;transform:scaleX(0.8890);">000000145</span><div class="abs" style="left:13px;top:546px;width:511px;height:16px;background:#fff"></div><div class="abs" style="left:24px;top:557px;width:10px;height:4px;background:#7ea6cc;border:1px solid #557799"></div><div class="abs" style="left:13px;top:546px;width:511px;height:16px;overflow:hidden"><span class="t" style="left:32.0px;top:4.5px;font-size:14px;line-height:18px;transform:scaleX(0.9217);">Антарюк Надежда Андреевна</span><span class="t" style="left:412.5px;top:4.5px;font-size:14px;line-height:18px;transform:scaleX(0.8890);">000000290</span></div><div class="abs" style="left:428px;top:562px;width:97px;height:22px;border:1px solid #a0a0a0;background:linear-gradient(#fff,#f0f0f0)"><div class="abs" style="left:23px;top:0;width:1px;height:20px;background:#a0a0a0"></div><div class="abs" style="left:47px;top:0;width:1px;height:20px;background:#a0a0a0"></div><div class="abs" style="left:71px;top:0;width:1px;height:20px;background:#a0a0a0"></div></div><svg class="abs" style="left:435px;top:569px;" width="10" height="7" viewBox="0 0 10 7"><path d="M0.4 0.5H9.6" stroke="#b4b4b4" stroke-width="1.2"/><path d="M0.4 6 L5 1.4 L9.6 6Z" fill="#b4b4b4"/></svg><svg class="abs" style="left:459px;top:570px;" width="10" height="6" viewBox="0 0 10 6"><path d="M0.4 5 L5 0.4 L9.6 5Z" fill="#b4b4b4"/></svg><svg class="abs" style="left:483px;top:570px;" width="10" height="6" viewBox="0 0 10 6"><path d="M0.4 0.4 H9.6 L5 5Z" fill="#333"/></svg><svg class="abs" style="left:507px;top:570px;" width="10" height="7" viewBox="0 0 10 7"><path d="M0.4 0.4 H9.6 L5 5Z" fill="#333"/><path d="M0.4 6H9.6" stroke="#333" stroke-width="1.2"/></svg></div>
<div id="status" class="abs" style="left:0px;top:810px;width:1711px;height:31px;background:#afafaf;border-top:1px solid #a2a2a2;overflow:hidden"><div class="abs" style="left:6px;top:6px;width:22px;height:20px;background:linear-gradient(#fcfcfc,#f1f1f1);border-radius:3px;box-shadow:0 0 1.5px rgba(0,0,0,.45)"><svg class="abs" style="left:4px;top:4px;" width="16" height="15" viewBox="0 0 16 15"><path d="M5 4.4 V1.6 Q5 0.9 5.7 0.9 H14.5 Q15.2 0.9 15.2 1.6 V6.2 Q15.2 6.9 14.5 6.9 H11.6" fill="none" stroke="#444" stroke-width="1.15"/><rect x="0.9" y="4.9" width="10.2" height="6.6" rx="0.8" fill="none" stroke="#444" stroke-width="1.15"/><path d="M6 11.5V13.3M3.2 13.6H8.8" stroke="#444" stroke-width="1.15" stroke-linecap="round"/></svg></div><span class="t" style="left:34.2px;top:6.5px;font-size:14px;line-height:18px;color:#ff0814;transform:scaleX(0.9255);">Текущие вызовы: 1</span><span class="t" style="left:162.2px;top:6.5px;font-size:14px;line-height:18px;color:#ff0814;transform:scaleX(0.9133);">Накопленные вызовы: 63</span><span class="t" style="left:1194.6px;top:10.0px;font-size:19px;line-height:23px;color:#a9a9a9;letter-spacing:0.441px;">Активация Windows</span></div>
</body></html>
